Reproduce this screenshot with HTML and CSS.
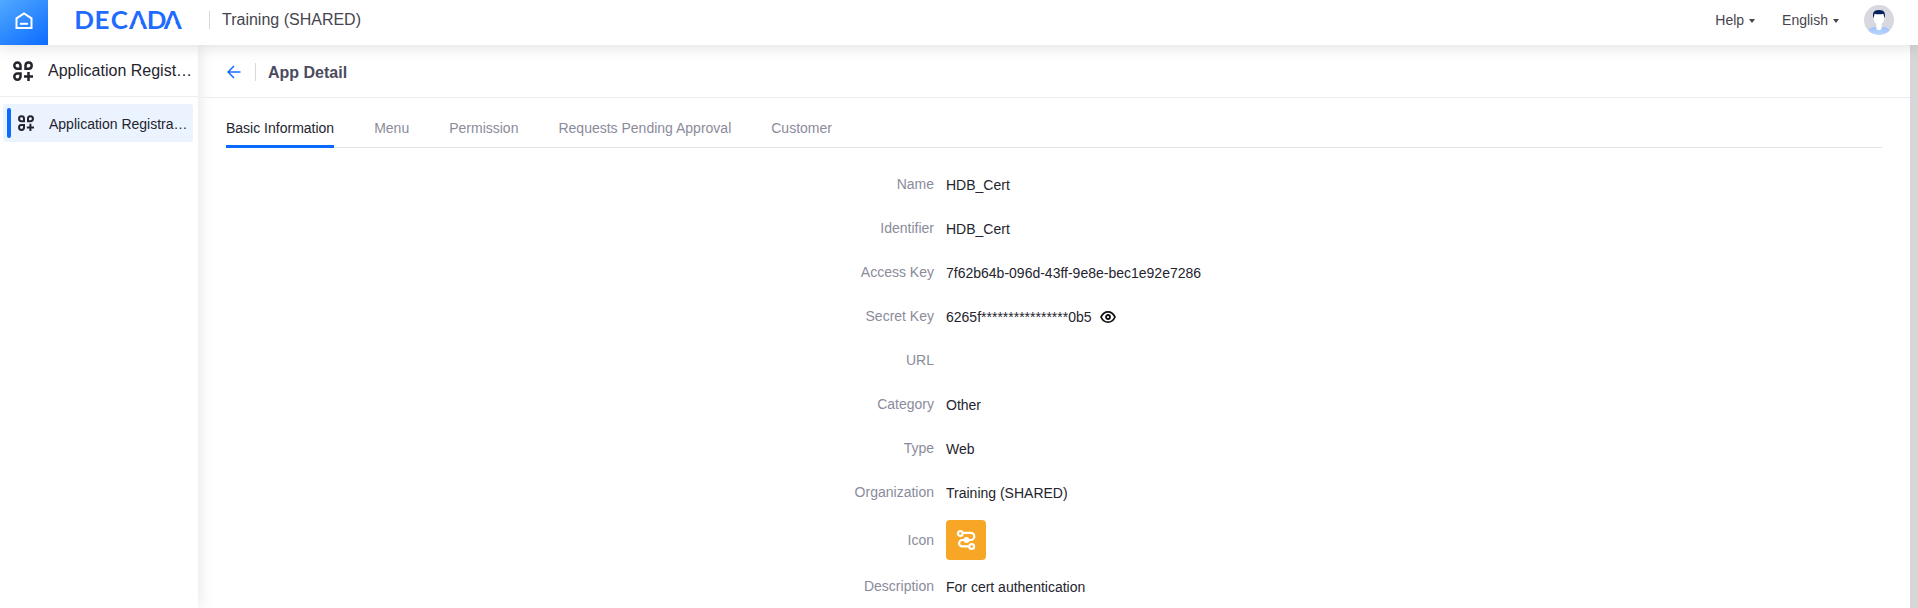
FILE: index.html
```
<!DOCTYPE html>
<html lang="en">
<head>
<meta charset="utf-8">
<title>App Detail</title>
<link rel="stylesheet" href="styles.css">
</head>
<body>
<svg class="defs" width="0" height="0">
  <symbol id="apps" viewBox="0 0 20 20">
    <g fill="none" stroke="currentColor" stroke-width="2.5">
      <path d="M1.300 4.600a3.100 3.100 0 0 1 6.200 0V7.700H4.400A3.100 3.100 0 0 1 1.300 4.600z"/>
      <path d="M12.500 7.700V4.400a3.100 3.100 0 1 1 3.100 3.300z"/>
      <path d="M7.500 12.500v3.100a3.100 3.100 0 1 1-3.100-3.100z"/>
      <path d="M15.500 11v9M11 15.500h9"/>
    </g>
  </symbol>
</svg>
<header class="topbar">
  <a class="home">
    <svg width="18" height="18" viewBox="0 0 18 18" fill="none" stroke="#fff" stroke-width="2">
      <path d="M1.500 6.300L9 1.400l7.500 4.900v9.700h-15z"/><path d="M5 11.800h8"/>
    </svg>
  </a>
  <svg class="logo" width="110" height="24" viewBox="0 0 110 24">
    <g transform="scale(1.08 1)">
      <text class="logo-text" text-anchor="middle" x="9.300 25.900 41.900 59.300 76.400 91.500" y="19">DECADA</text>
      <path class="logo-cut" d="M55.100 17l4.200-11 4.200 11zM87.300 17l4.200-11 4.200 11z"/>
    </g>
  </svg>
  <span class="org">Training (SHARED)</span>
  <nav class="tools">
    <span class="drop">Help</span>
    <span class="drop">English</span>
    <svg class="avatar" width="30" height="30" viewBox="0 0 30 30">
      <defs>
        <clipPath id="disc"><circle cx="15" cy="15" r="15"/></clipPath>
        <linearGradient id="shirt" x1="0" y1="0" x2="0" y2="1"><stop offset="0" stop-color="#9fc2fb"/><stop offset="1" stop-color="#bcd5ff"/></linearGradient>
      </defs>
      <g clip-path="url(#disc)">
        <rect width="30" height="30" fill="#d7d8e0"/>
        <path d="M3 30c0-5 3-8 8-8h8c5 0 8 3 8 8z" fill="url(#shirt)"/>
        <path d="M12.3 17h5.4v5.5a2.7 2.7 0 0 1-5.4 0z" fill="#fff"/>
        <path d="M9.800 9h10.400v4.500c0 3.500-2.500 6.300-5.200 6.300s-5.200-2.800-5.200-6.300z" fill="#fff"/>
        <path d="M9.400 13c-1.200-4.500 0-8 5.600-8s6.800 3.500 5.600 8c-.8-.8-.7-3.500-1.300-4.200-2.400.7-6.200.7-8.600 0-.6.7-.5 3.400-1.300 4.200z" fill="#061f5c"/>
      </g>
    </svg>
  </nav>
</header>
<div class="body">
  <aside class="side">
    <div class="side-head">
      <svg class="side-icon" width="20" height="20"><use href="#apps"/></svg>
      <span class="label">Application Regist…</span>
    </div>
    <a class="side-item">
      <i class="marker"></i>
      <svg width="16" height="16"><use href="#apps"/></svg>
      <span class="label">Application Registra…</span>
    </a>
  </aside>
  <main class="main">
    <div class="page-head">
      <svg width="14" height="14" viewBox="0 0 14 14" fill="none" stroke="#1769ff" stroke-width="1.5"><path d="M13.500 7H1.200M7 1L1 7l6 6"/></svg>
      <h1 class="title">App Detail</h1>
    </div>
    <nav class="tabs">
      <a class="tab active">Basic Information</a>
      <a class="tab">Menu</a>
      <a class="tab">Permission</a>
      <a class="tab">Requests Pending Approval</a>
      <a class="tab">Customer</a>
    </nav>
    <dl class="form">
      <dt>Name</dt><dd>HDB_Cert</dd>
      <dt>Identifier</dt><dd>HDB_Cert</dd>
      <dt>Access Key</dt><dd>7f62b64b-096d-43ff-9e8e-bec1e92e7286</dd>
      <dt>Secret Key</dt>
      <dd>6265f****************0b5
        <svg class="eye" width="16" height="14" viewBox="0 0 16 14" fill="none" stroke="#111"><path stroke-width="1.800" d="M1 7c1.600-3.500 4-5.200 7-5.200S13.400 3.500 15 7c-1.600 3.500-4 5.200-7 5.200S2.600 10.500 1 7z"/><circle cx="8" cy="7" r="2" stroke-width="1.800"/></svg>
      </dd>
      <dt>URL</dt><dd></dd>
      <dt>Category</dt><dd>Other</dd>
      <dt>Type</dt><dd>Web</dd>
      <dt>Organization</dt><dd>Training (SHARED)</dd>
      <dt class="tall">Icon</dt>
      <dd class="tall"><span class="app-icon">
        <svg width="20" height="22" viewBox="0 0 20 22" fill="none" stroke="#fff" stroke-width="2.200">
          <circle cx="4.300" cy="4.500" r="2.400"/><circle cx="15.700" cy="17.500" r="2.400"/>
          <path d="M6.700 3.800h8a3.600 3.600 0 0 1 0 7.200H6.300a3.100 3.100 0 0 0 0 6.400h7"/>
          <circle cx="10.500" cy="11" r="1.900" fill="#fff"/>
        </svg></span></dd>
      <dt>Description</dt><dd>For cert authentication</dd>
    </dl>
  </main>
  <div class="scrollbar"></div>
</div>
</body>
</html>
```
FILE: styles.css
```
* { box-sizing: border-box; }
body {
  margin: 0;
  height: 608px;
  overflow: hidden;
  display: flex;
  flex-direction: column;
  background: #fff;
  color: #24242e;
  font: 14px/22px "Liberation Sans", Arial, sans-serif;
}
svg { display: block; flex: none; }
.defs { position: absolute; }
.topbar {
  flex: none;
  height: 45px;
  display: flex;
  background: #fff;
  box-shadow: 0 2px 14px rgba(0, 0, 0, .13);
  z-index: 2;
}
.home {
  width: 48px;
  display: flex;
  justify-content: center;
  padding-top: 12px;
  padding-right: 1px;
  background: linear-gradient(145deg, #51a9ff, #0b6bff);
}
.logo { margin: 10px 0 0 26px; overflow: visible; }
.logo-text { font: 700 24px/24px Lato, sans-serif; fill: #1f6bff; }
.logo-cut { fill: #fff; }
.org {
  height: 18px;
  margin: 11px 0 0 25px;
  padding-left: 12px;
  border-left: 1px solid #d9d9de;
  color: #45454d;
  font-size: 16px;
  line-height: 18px;
}
.tools {
  flex: 1;
  display: flex;
  justify-content: flex-end;
  padding-right: 24px;
  color: #45454d;
}
.drop {
  display: flex;
  align-items: center;
  gap: 5px;
  height: 40px;
  margin-right: 27px;
}
.drop + .drop { margin-right: 28px; }
.drop::after {
  content: "";
  margin-top: 2px;
  border: 3.500px solid transparent;
  border-top: 4px solid #45454d;
  border-bottom: 0;
}
.avatar { margin-top: 5px; margin-left: -3px; }
.body { flex: 1; min-height: 0; display: flex; }
.side { flex: none; width: 198px; box-shadow: 0 0 16px rgba(0, 0, 0, .12); }
.side-head {
  height: 52px;
  display: flex;
  align-items: center;
  gap: 15px;
  padding: 0 0 0 13px;
  border-bottom: 1px solid #ececf2;
  font-size: 16px;
}
.label { white-space: nowrap; }
.side-item {
  display: flex;
  align-items: center;
  height: 38px;
  margin: 7px 5px 0 3px;
  padding: 0 0 0 4px;
  border-radius: 3px;
  background: #ebf3ff;
}
.marker { flex: none; width: 4px; height: 30px; margin-right: 7px; border-radius: 2px; background: #0b6bff; }
.side-item .label { margin-left: 15px; padding-top: 2px; }
.main { flex: 1; min-width: 0; }
.page-head {
  height: 53px;
  display: flex;
  align-items: center;
  padding: 2px 0 0 29px;
  border-bottom: 1px solid #ebebf0;
}
.title {
  margin: 0 0 0 14px;
  padding-left: 12px;
  border-left: 1px solid #d9d9de;
  color: #4b4b5e;
  font-size: 16px;
  line-height: 20px;
  height: 18px;
}
.tabs {
  display: flex;
  gap: 40px;
  height: 50px;
  margin: 0 28px;
  box-shadow: inset 0 -1px #e4e4e8;
}
.tab { padding-top: 19px; color: #8b8b9b; }
.tab.active { color: #24242e; border-bottom: 3px solid #0b6bff; }
.form {
  display: grid;
  grid-template-columns: 736px 1fr;
  column-gap: 12px;
  margin: 14px 0 0;
  line-height: 44px;
}
dt { height: 44px; text-align: right; color: #8b8b9b; }
dd { display: flex; align-items: center; gap: 8px; height: 44px; margin: 0; padding-top: 2px; }
dt.tall, dd.tall { height: 50px; line-height: 52px; }
.app-icon {
  width: 40px;
  height: 40px;
  display: flex;
  align-items: center;
  justify-content: center;
  border-radius: 4px;
  background: #f7a725;
}
.scrollbar { width: 8px; background: #d6d6d6; }
```
